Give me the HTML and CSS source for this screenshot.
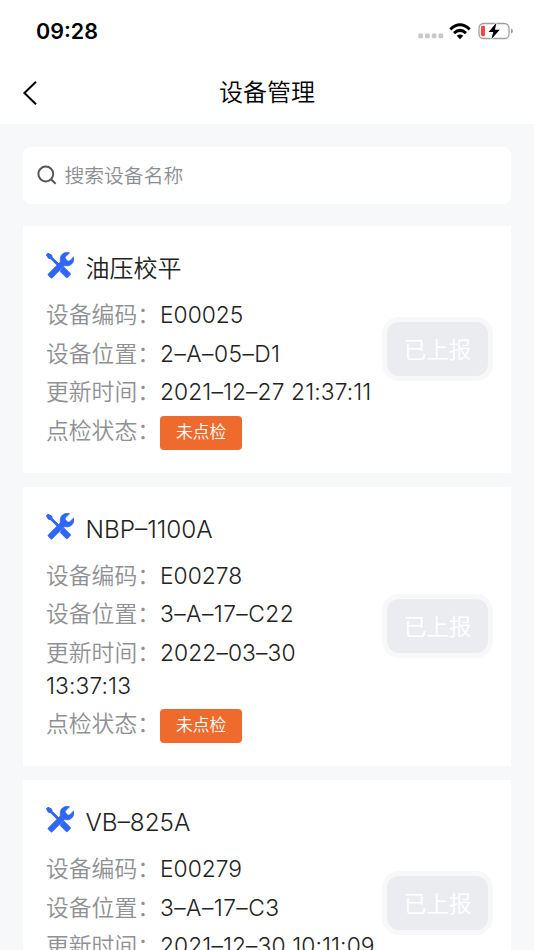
FILE: index.html
```
<!DOCTYPE html>
<html lang="zh-CN">
<head>
    <meta charset="UTF-8">
    <meta name="viewport" content="width=device-width, initial-scale=1.0">
    <title>设备管理</title>
    <link rel="stylesheet" href="styles.css">
</head>
<body>
    <svg width="0" height="0" class="sprite">
        <symbol id="tools" viewBox="0 0 28 28">
            <path d="M2 1.2 L5.6 3.1 L6.2 5.4 L14.2 13.2 L12.6 14.8 L4.7 6.8 L2.4 6.2 L.4 2.8 Z" stroke="#2f66f6" stroke-width="1" stroke-linejoin="round"/>
            <path d="M15.2 17.3 L17.8 14.8 L24.3 21.2 Q25.1 22 24.3 22.8 L21.7 25.4 Q20.8 26.2 20 25.4 L14.1 19.4 Z" stroke="#2f66f6" stroke-width=".6"/>
            <path d="M23.6 .8 C19.6 -.8 14.4 1.8 14.2 6.6 C14.1 8.2 14.5 9.1 14.1 10.1 L2.4 21.7 Q1.5 22.6 2.4 23.5 L4.6 25.7 Q5.5 26.6 6.4 25.7 L18 14.1 C19 13.5 20 13.9 21.4 13.9 C26.2 13.7 29 8.5 27.7 4.8 L23.8 8.7 Q22.8 9.4 21.7 8.9 L19.6 6.8 Q19 5.5 19.8 4.6 Z" stroke="#2f66f6" stroke-width=".6"/>
        </symbol>
    </svg>

    <header>
        <div class="status-bar">
            <span class="time">09:28</span>
            <div class="status-icons">
                <svg class="signal" width="26" height="6" viewBox="0 0 26 6" fill="#c8c8c8">
                    <rect x="0.3" y="0.5" width="4.8" height="4.8" rx="1.4"/>
                    <rect x="7" y="0.5" width="4.8" height="4.8" rx="1.4"/>
                    <rect x="13.7" y="0.5" width="4.8" height="4.8" rx="1.4"/>
                    <rect x="20.4" y="0.5" width="4.8" height="4.8" rx="1.4"/>
                </svg>
                <svg class="wifi" width="22" height="17" viewBox="0 0 22 17" fill="none" stroke="#000" stroke-width="3">
                    <path d="M1.3 6.3 Q11 -2.7 20.7 6.3"/>
                    <path d="M5 10.2 Q11 4.6 17 10.2"/>
                    <path d="M7.7 12.8 Q11 10 14.3 12.8 L11 16.2 Z" fill="#000" stroke="none"/>
                </svg>
                <svg class="battery" width="36" height="18" viewBox="0 0 36 18">
                    <rect x="1" y="1.5" width="30" height="15" rx="4.5" fill="none" stroke="#a0a0a0" stroke-width="1.3"/>
                    <path d="M33 6.5 Q35 7.3 35 9 Q35 10.7 33 11.5 Z" fill="#a0a0a0"/>
                    <rect x="3" y="3.8" width="4" height="10.4" rx="1.4" fill="#f04a3e"/>
                    <path d="M18.4 .8 L10.6 10.1 H15.3 L13.3 17.2 L21.8 7.7 H17 Z" fill="#000" stroke="#fff" stroke-width="1.6" paint-order="stroke"/>
                </svg>
            </div>
        </div>
        <div class="nav-bar">
            <svg class="back" width="16" height="26" viewBox="0 0 16 26" fill="none" stroke="#000" stroke-width="2">
                <path d="M14 1.8 L2.4 13 L14 24.3"/>
            </svg>
            <h1>设备管理</h1>
        </div>
    </header>

    <main>
        <div class="search">
            <svg width="20" height="20" viewBox="0 0 20 20" fill="none" stroke="#55575c" stroke-width="2">
                <circle cx="8.8" cy="9" r="7.4"/>
                <path d="M14 14.3 L18.6 18.8"/>
            </svg>
            <span>搜索设备名称</span>
        </div>

        <div class="card">
            <div class="info">
                <h2><svg class="tool-icon"><use href="#tools"/></svg><span class="name-cn">油压校平</span></h2>
                <p><span class="label">设备编码：</span>E00025</p>
                <p><span class="label">设备位置：</span><span class="place">2–A–05–D1</span></p>
                <p><span class="label">更新时间：</span><span class="date">2021–12–27 21:37:11</span></p>
                <p><span class="label">点检状态：</span><span class="tag">未点检</span></p>
            </div>
            <button class="report" disabled>已上报</button>
        </div>

        <div class="card">
            <div class="info">
                <h2><svg class="tool-icon"><use href="#tools"/></svg>NBP–1100A</h2>
                <p><span class="label">设备编码：</span>E00278</p>
                <p><span class="label">设备位置：</span><span class="place">3–A–17–C22</span></p>
                <p><span class="label">更新时间：</span><span class="date">2022–03–30<br>13:37:13</span></p>
                <p><span class="label">点检状态：</span><span class="tag">未点检</span></p>
            </div>
            <button class="report" disabled>已上报</button>
        </div>

        <div class="card">
            <div class="info">
                <h2><svg class="tool-icon"><use href="#tools"/></svg>VB–825A</h2>
                <p><span class="label">设备编码：</span>E00279</p>
                <p><span class="label">设备位置：</span><span class="place">3–A–17–C3</span></p>
                <p><span class="label">更新时间：</span><span class="date">2021–12–30 10:11:09</span></p>
                <p><span class="label">点检状态：</span><span class="tag">未点检</span></p>
            </div>
            <button class="report" disabled>已上报</button>
        </div>
    </main>
</body>
</html>
```
FILE: styles.css
```
* {
    box-sizing: border-box;
}

body {
    margin: 0;
    height: 950px;
    overflow: hidden;
    font-family: Inter, "Noto Sans CJK SC", sans-serif;
    font-weight: 350;
    background: #f7f8fa;
    color: #222;
}

.sprite {
    display: block;
}

header {
    height: 124px;
    background: #fff;
}

.status-bar {
    display: flex;
    justify-content: space-between;
    height: 62px;
    padding: 0 20px 0 36px;
    align-items: center;
}

.time {
    font-size: 21.5px;
    font-weight: 600;
    color: #000;
}

.status-icons {
    display: flex;
    align-items: center;
}

.signal {
    margin: 10px 5px 0 0;
}

.wifi {
    margin-right: 7px;
}

.nav-bar {
    display: grid;
    grid-template-columns: 60px 1fr 60px;
    align-items: center;
    height: 61px;
}

.back {
    margin-left: 22px;
}

h1 {
    margin: 0;
    font-size: 24px;
    font-weight: 350;
    line-height: 36px;
    text-align: center;
    color: #000;
}

main {
    padding: 23px 23px 0;
}

.search {
    display: flex;
    align-items: center;
    gap: 8px;
    height: 57px;
    margin-bottom: 22px;
    padding: 0 0 2px 13.5px;
    background: #fff;
    border-radius: 8px;
    font-size: 19.8px;
    color: #8c8e93;
}

.card {
    display: flex;
    align-items: center;
    justify-content: space-between;
    margin-bottom: 14px;
    padding: 23px;
    background: #fff;
}

.info {
    width: 335px;
}

h2 {
    display: flex;
    align-items: center;
    margin: 0 0 11px;
    height: 38px;
    font-size: 24.3px;
    font-weight: 350;
}

.name-cn {
    font-size: 24px;
    margin-top: -4px;
}

.tool-icon {
    width: 28px;
    height: 28px;
    margin: -4px 11.5px 0 0;
    fill: #2f66f6;
}

.info p {
    margin: 0 0 5.5px;
    font-size: 22.8px;
    line-height: 33px;
    white-space: nowrap;
}

.info p:last-child {
    display: flex;
    margin: 0;
    height: 36px;
}

.label {
    color: #8f9094;
}

.place {
    letter-spacing: .45px;
}

.date {
    letter-spacing: .1px;
}

.tag {
    height: 34px;
    margin-top: 2px;
    padding: 0 16px;
    border-radius: 4px;
    background: #ee6b2d;
    color: #fff;
    font-size: 16.8px;
    line-height: 33px;
}

.report {
    flex: none;
    width: 101px;
    height: 54px;
    padding: 0 0 3px;
    border: 0;
    border-radius: 12px;
    background: #ebecf0;
    box-shadow: 0 0 0 5px #f8f8f9;
    color: #fff;
    font: inherit;
    font-size: 22.5px;
}
```
